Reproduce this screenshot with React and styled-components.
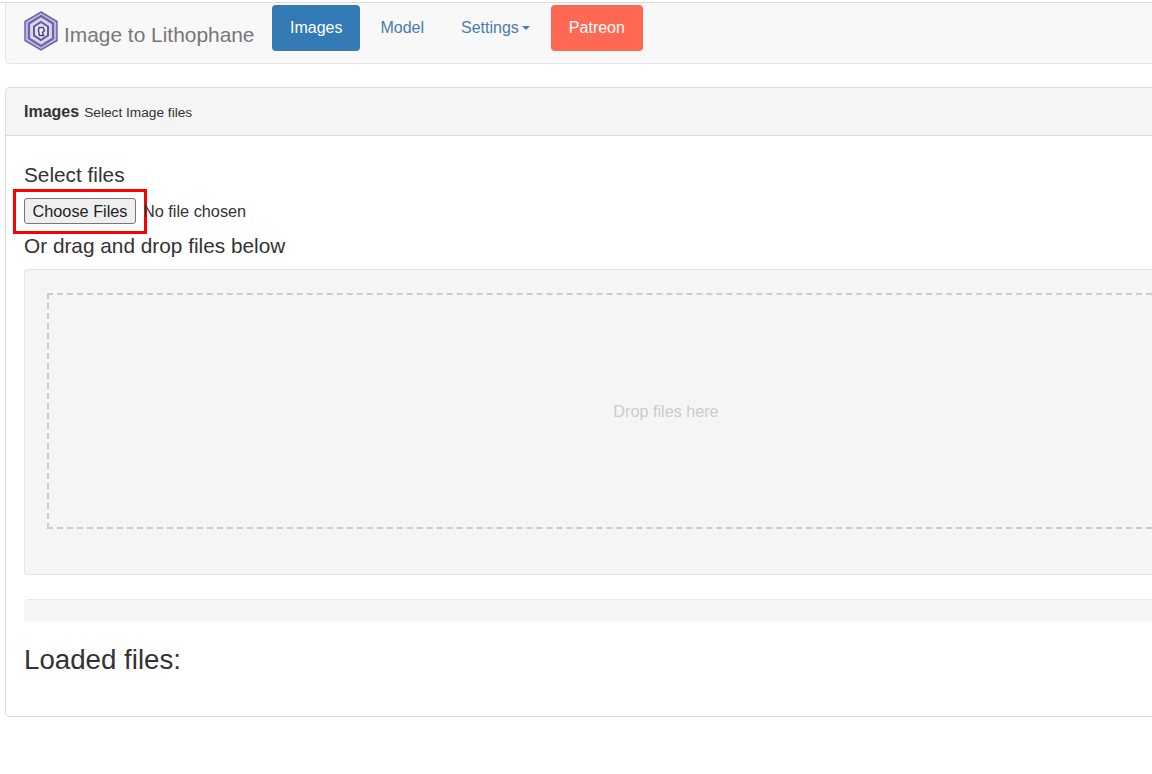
import React from "react";
import styled, { createGlobalStyle } from "styled-components";

const Global = createGlobalStyle`
  html, body {
    margin: 0;
    padding: 0;
    background: #fff;
    overflow: hidden;
    height: 774px;
  }
  body {
    font-family: "Liberation Sans", Arial, sans-serif;
    color: #333;
  }
`;

// the shot is cut off on the right, so nothing has a right border or radius
const Page = styled.div`
  width: 1152px;
  padding: 2px 0 0 5px;
  box-sizing: border-box;
`;

const TopLine = styled.div`
  height: 1px;
  margin-left: -5px;
  background: #dcdcdc;
`;

const Navbar = styled.nav`
  display: flex;
  align-items: flex-start;
  height: 61px;
  box-sizing: border-box;
  padding: 2px 0 0 18px;
  background: #f8f8f8;
  border: 1px solid #e7e7e7;
  border-width: 0 0 1px 1px;
  border-radius: 0 0 0 5px;
  margin-bottom: 23px;
`;

const Brand = styled.a`
  display: flex;
  align-items: center;
  height: 50px;
  width: 248px;
  margin-top: 5px;
  font-size: 20.9px;
  color: #777;
  gap: 6px;
  svg {
    flex: none;
    margin-top: -9px;
  }
`;

const NavItem = styled.a`
  display: flex;
  align-items: center;
  justify-content: center;
  height: 46px;
  box-sizing: border-box;
  padding: 0 18px;
  margin-right: ${(p) => p.$gap || 0}px;
  border-radius: 4px;
  font-size: 16px;
  color: ${(p) => (p.$bg ? "#fff" : "#4a7cab")};
  background: ${(p) => p.$bg || "transparent"};
`;

const Caret = styled.span`
  width: 0;
  height: 0;
  margin-left: 3px;
  border-top: 4px solid #4a7cab;
  border-left: 4px solid transparent;
  border-right: 4px solid transparent;
`;

const Panel = styled.section`
  height: 630px;
  box-sizing: border-box;
  border: 1px solid #ddd;
  border-right: 0;
  border-radius: 5px 0 0 5px;
  background: #fff;
`;

const PanelHeading = styled.header`
  display: flex;
  align-items: baseline;
  gap: 5px;
  height: 48px;
  box-sizing: border-box;
  padding: 15px 18px 0;
  background: #f5f5f5;
  border-bottom: 1px solid #ddd;
  border-radius: 4px 0 0 0;
  font-size: 13.7px;
  color: #333;
  strong {
    font-size: 16px;
    font-weight: 700;
  }
`;

const PanelBody = styled.div`
  padding: 28px 0 0 18px;
`;

const Label = styled.div`
  font-size: 20.8px;
  line-height: 22px;
  color: #333;
`;

const FileRow = styled.div`
  display: flex;
  align-items: center;
  height: 30px;
  margin: 10px 0 9px;
  font-size: 16.3px;
  color: #333;
`;

const Highlight = styled.div`
  display: flex;
  align-items: center;
  box-sizing: border-box;
  width: 134px;
  height: 45px;
  margin: -8px 0 -8px -11px;
  padding-left: 8px;
  border: 3px solid #f00;
`;

const ChooseButton = styled.button`
  width: 112px;
  height: 26px;
  padding: 0;
  font: 16.3px "Liberation Sans", Arial, sans-serif;
  color: #222;
  background: #efefef;
  border: 1px solid #777;
  border-radius: 3px;
`;

const NoFile = styled.span`
  margin-left: -4px;
`;

const Well = styled.div`
  height: 306px;
  margin-top: 12px;
  padding: 23px 0 23px 22px;
  box-sizing: border-box;
  background: #f5f5f5;
  border: 1px solid #e3e3e3;
  border-right: 0;
  border-radius: 4px 0 0 4px;
`;

const DropZone = styled.div`
  display: flex;
  align-items: center;
  justify-content: center;
  height: 236px;
  box-sizing: border-box;
  padding-left: 131px;
  border: 2px dashed #ccc;
  border-right: 0;
  font-size: 16.2px;
  color: #ccc;
`;

const Progress = styled.div`
  height: 23px;
  margin-top: 24px;
  background: #f5f5f5;
  border-radius: 4px 0 0 4px;
  border-top: 1px solid #e9e9e9;
  box-sizing: border-box;
`;

const Loaded = styled.h3`
  margin: 23px 0 0;
  font-size: 27.7px;
  line-height: 30px;
  font-weight: 400;
  color: #333;
`;

const Logo = () => (
  <svg width="34" height="40" viewBox="0 0 34 40">
    <path d="M17 1 33 10.500v19L17 39 1 29.500v-19z" fill="#bdb9dc" stroke="#6a65a8" strokeWidth="1.500" />
    <path d="M17 5 29 12.500v15L17 35 5 27.500v-15z" fill="#d9d6ec" stroke="#6a65a8" strokeWidth="2.200" />
    <path d="M17 11 24 15.500v9L17 29l-7-4.500v-9z" fill="#e4e2f1" stroke="#5f5a9e" strokeWidth="2" />
    <path d="M15 16.500h4l1.500 3-2 2 1 3h-4l-1-4.500z" fill="#f1f0f8" stroke="#4b4688" strokeWidth="1.500" />
  </svg>
);

export default function App() {
  return (
    <Page>
      <Global />
      <TopLine />
      <Navbar>
        <Brand>
          <Logo />
          Image to Lithophane
        </Brand>
        <NavItem $bg="#337ab7" $gap={2}>Images</NavItem>
        <NavItem $gap={1}>Model</NavItem>
        <NavItem $gap={3}>
          Settings
          <Caret />
        </NavItem>
        <NavItem $bg="#ff6853">Patreon</NavItem>
      </Navbar>
      <Panel>
        <PanelHeading>
          <strong>Images</strong>
          Select Image files
        </PanelHeading>
        <PanelBody>
          <Label>Select files</Label>
          <FileRow>
            <Highlight>
              <ChooseButton>Choose Files</ChooseButton>
            </Highlight>
            <NoFile>No file chosen</NoFile>
          </FileRow>
          <Label>Or drag and drop files below</Label>
          <Well>
            <DropZone>Drop files here</DropZone>
          </Well>
          <Progress />
          <Loaded>Loaded files:</Loaded>
        </PanelBody>
      </Panel>
    </Page>
  );
}
